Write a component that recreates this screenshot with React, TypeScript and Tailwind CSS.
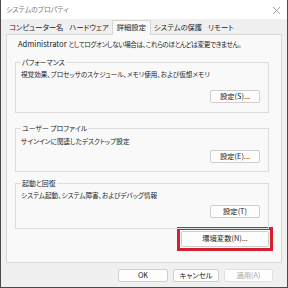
import React from "react";

const Btn = ({ label, className = "", disabled = false }: { label: string; className?: string; disabled?: boolean }) => (
  <div
    className={`h-[13px] flex items-center justify-center bg-[#fdfdfd] border rounded-[2px] ${
      disabled ? "border-[#e0e0e0] text-[#a8a8a8]" : "border-[#cfcfcf] text-[#222]"
    } ${className}`}
  >
    {label}
  </div>
);

const Group = ({
  title,
  desc,
  btn,
  className = "",
  descTop,
}: {
  title: string;
  desc: string;
  btn: string;
  className?: string;
  descTop: string;
}) => (
  <div className={`relative ml-[8px] mr-[12px] border border-[#dcdcdc] flex flex-col ${className}`}>
    <div className="absolute -top-[5px] left-[5px] px-[1px] bg-[#f9f9f9] leading-[9px] text-[6.9px]">{title}</div>
    <div className={`pl-[5px] leading-[9px] text-[6.6px] ${descTop}`}>{desc}</div>
    <div className="flex-1" />
    <div className="flex justify-end pr-[8px]">
      <Btn label={btn} className="w-[50px]" />
    </div>
  </div>
);

export default function App() {
  return (
    <div className="w-[288px] h-[288px] overflow-hidden bg-[#f0f0f0] border-l border-r border-b border-[#4a4a4a] flex flex-col text-[#222] font-['Noto_Sans_CJK_JP','Noto_Sans',sans-serif] [font-feature-settings:'palt'] text-[7.3px] leading-none">
      {/* title bar */}
      <div className="h-[19px] shrink-0 bg-white flex items-center justify-between pl-[5px] pr-[6px] text-[#7a7a7a]">
        <span className="text-[6.9px]">システムのプロパティ</span>
        <svg width="9" height="9" viewBox="0 0 9 9" className="mt-[1px]">
          <path d="M1 1L8 8M8 1L1 8" stroke="#9a9a9a" strokeWidth="0.9" />
        </svg>
      </div>
      {/* tabs */}
      <div className="h-[15px] shrink-0 flex items-end pl-[5px]">
        <div className="h-[13px] px-[3px] flex items-center">コンピューター名</div>
        <div className="h-[13px] px-[3px] flex items-center">ハードウェア</div>
        <div className="h-[15px] px-[4px] flex items-center bg-[#f9f9f9] border border-b-0 border-[#d6d6d6] -mb-[1px] relative z-10">
          詳細設定
        </div>
        <div className="h-[13px] px-[3px] flex items-center">システムの保護</div>
        <div className="h-[13px] px-[3px] flex items-center">リモート</div>
      </div>
      {/* panel */}
      <div className="mx-[5px] h-[229px] shrink-0 bg-[#f9f9f9] border border-[#d9d9d9] flex flex-col">
        <div className="pl-[11px] pt-[4px] leading-[9px]">
          <span className="text-[7.6px]">Administrator </span>
          <span className="text-[6.6px] tracking-[-0.4px]">としてログオンしない場合は、これらのほとんどは変更できません。</span>
        </div>
        <Group
          title="パフォーマンス"
          desc="視覚効果、プロセッサのスケジュール、メモリ使用、および仮想メモリ"
          btn="設定(S)..."
          className="mt-[13px] h-[51px] pb-[9px]"
          descTop="pt-[7px]"
        />
        <Group
          title="ユーザー プロファイル"
          desc="サインインに関連したデスクトップ設定"
          btn="設定(E)..."
          className="mt-[15px] h-[44px] pb-[8px]"
          descTop="pt-[8px]"
        />
        <Group
          title="起動と回復"
          desc="システム起動、システム障害、およびデバッグ情報"
          btn="設定(T)"
          className="mt-[11px] h-[46px] pb-[10px]"
          descTop="pt-[7px]"
        />
        <div className="flex justify-end mr-[8px] -mt-[2px]">
          <div className="border-[3px] border-[#d51f2f] p-[1px]">
            <Btn label="環境変数(N)..." className="w-[88px] h-[16px]" />
          </div>
        </div>
      </div>
      {/* bottom buttons */}
      <div className="flex justify-end gap-[5px] pr-[14px] pt-[6px]">
        <Btn label="OK" className="w-[50px]" />
        <Btn label="キャンセル" className="w-[46px]" />
        <Btn label="適用(A)" className="w-[49px]" disabled />
      </div>
    </div>
  );
}
